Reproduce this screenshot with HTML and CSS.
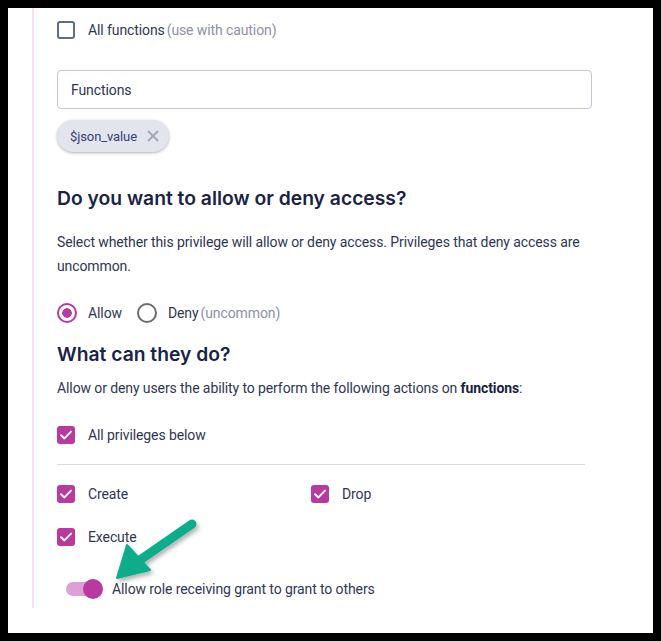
FILE: index.html
```html
<!DOCTYPE html>
<html>
<head>
<meta charset="utf-8">
<link rel="stylesheet" href="styles.css">
</head>
<body>
<div class="panel">
  <label class="check-row">
    <span class="box"></span>
    <span class="label">All functions<span class="muted">(use with caution)</span></span>
  </label>

  <div class="input">Functions</div>

  <div class="chip">
    <span>$json_value</span>
    <svg class="chip-x" width="14" height="14" viewBox="0 0 14 14"><path d="M2 2L12 12M12 2L2 12" stroke="#a3a6b6" stroke-width="1.8" fill="none"/></svg>
  </div>

  <h2 class="h1">Do you want to allow or deny access?</h2>
  <p class="para">Select whether this privilege will allow or deny access. Privileges that deny access are uncommon.</p>

  <div class="radio-row">
    <span class="radio on"></span><span class="label">Allow</span>
    <span class="radio"></span><span class="label">Deny<span class="muted">(uncommon)</span></span>
  </div>

  <h2 class="h2">What can they do?</h2>
  <p class="para2">Allow or deny users the ability to perform the following actions on <b>functions</b>:</p>

  <label class="check-row all">
    <span class="box checked"><svg width="18" height="18" viewBox="0 0 18 18"><path d="M4 9.2L7.4 12.4L14 5.6" stroke="#fff" stroke-width="2" fill="none" stroke-linecap="round" stroke-linejoin="round"/></svg></span>
    <span class="label">All privileges below</span>
  </label>

  <div class="divider"></div>

  <div class="grid">
    <label class="check-row">
      <span class="box checked"><svg width="18" height="18" viewBox="0 0 18 18"><path d="M4 9.2L7.4 12.4L14 5.6" stroke="#fff" stroke-width="2" fill="none" stroke-linecap="round" stroke-linejoin="round"/></svg></span>
      <span class="label">Create</span>
    </label>
    <label class="check-row">
      <span class="box checked"><svg width="18" height="18" viewBox="0 0 18 18"><path d="M4 9.2L7.4 12.4L14 5.6" stroke="#fff" stroke-width="2" fill="none" stroke-linecap="round" stroke-linejoin="round"/></svg></span>
      <span class="label">Drop</span>
    </label>
    <label class="check-row">
      <span class="box checked"><svg width="18" height="18" viewBox="0 0 18 18"><path d="M4 9.2L7.4 12.4L14 5.6" stroke="#fff" stroke-width="2" fill="none" stroke-linecap="round" stroke-linejoin="round"/></svg></span>
      <span class="label">Execute</span>
    </label>
  </div>

  <div class="toggle-row">
    <span class="toggle"><span class="knob"></span></span>
    <span class="label">Allow role receiving grant to grant to others</span>
  </div>
</div>

<svg class="arrow" width="120" height="90" viewBox="100 510 120 90">
  <defs>
    <filter id="sh" x="-20%" y="-20%" width="150%" height="150%">
      <feDropShadow dx="2" dy="3" stdDeviation="2" flood-color="#000" flood-opacity="0.3"/>
    </filter>
  </defs>
  <g filter="url(#sh)" fill="#10ad8c">
    <path d="M192 524 L140 560" stroke="#10ad8c" stroke-width="9" stroke-linecap="round"/>
    <path d="M127 545 L117 578 L150 570 Z" stroke="#10ad8c" stroke-width="2" stroke-linejoin="round"/>
  </g>
</svg>
</body>
</html>
```

FILE: styles.css
```css
html {
  background: #000;
}
body {
  margin: 8px;
  height: 625px;
  background: #fff;
  font-family: Roboto, "Liberation Sans", sans-serif;
  font-size: 14px;
  letter-spacing: -0.1px;
  color: #2f3654;
  position: relative;
  overflow: hidden;
}
.panel {
  margin-left: 24px;
  border-left: 2px solid #f6e2f2;
  padding: 13px 0 9px 23px;
  width: 535px;
}
.check-row {
  display: flex;
  align-items: center;
  height: 18px;
  gap: 13px;
}
.box {
  width: 18px;
  height: 18px;
  box-sizing: border-box;
  border: 2px solid #5d6991;
  border-radius: 3px;
  flex: none;
  display: flex;
}
.box.checked {
  border: none;
  background: #b8399f;
}
.label {
  line-height: 18px;
  white-space: nowrap;
}
.muted {
  color: #8d91a5;
  margin-left: 2px;
}
.input {
  margin-top: 31px;
  height: 39px;
  box-sizing: border-box;
  border: 1px solid #c2c6d8;
  border-radius: 4px;
  padding: 0 13px;
  display: flex;
  align-items: center;
  color: #2f3550;
}
.chip {
  margin-top: 11px;
  display: inline-flex;
  align-items: center;
  height: 32px;
  box-sizing: border-box;
  padding: 0 9px 0 13px;
  gap: 9px;
  background: #e2e4ee;
  border-radius: 16px;
  box-shadow: 0 1px 3px rgba(0, 0, 0, 0.3);
  color: #364270;
  font-size: 13px;
}
.chip-x {
  display: block;
}
.h1, .h2 {
  margin: 0;
  font-family: Inter, "Open Sans", sans-serif;
  font-weight: 600;
  font-size: 19.3px;
  letter-spacing: 0;
  line-height: 24px;
  color: #1a2346;
}
.h1 {
  margin-top: 34px;
}
.para {
  margin: 20px 0 0;
  line-height: 24px;
  width: 540px;
}
.radio-row {
  margin-top: 25px;
  display: flex;
  align-items: center;
  height: 20px;
}
.radio {
  width: 20px;
  height: 20px;
  box-sizing: border-box;
  border: 2px solid #6b6b6b;
  border-radius: 50%;
  flex: none;
  margin-right: 11px;
}
.radio.on {
  border-color: #b8399f;
  background: radial-gradient(circle, #b8399f 0 4.5px, transparent 5px);
}
.radio-row .label {
  margin-right: 15px;
}
.h2 {
  margin-top: 19px;
}
.para2 {
  margin: 10px 0 0;
  line-height: 24px;
}
.para2 b {
  font-weight: 700;
  color: #1a2346;
}
.all {
  margin-top: 26px;
}
.divider {
  margin-top: 20px;
  height: 1px;
  background: #dcdcdc;
  width: 528px;
}
.grid {
  margin-top: 20px;
  display: grid;
  grid-template-columns: 254px 1fr;
  row-gap: 25px;
}
.toggle-row {
  margin-top: 33px;
  height: 20px;
  display: flex;
  align-items: center;
  padding-left: 9px;
}
.toggle {
  position: relative;
  width: 34px;
  height: 14px;
  border-radius: 7px;
  background: #dda0d6;
  margin-right: 12px;
}
.knob {
  position: absolute;
  right: -3px;
  top: -3px;
  width: 20px;
  height: 20px;
  border-radius: 50%;
  background: #b8399f;
}
.arrow {
  position: absolute;
  left: 92px;
  top: 502px;
}
```
